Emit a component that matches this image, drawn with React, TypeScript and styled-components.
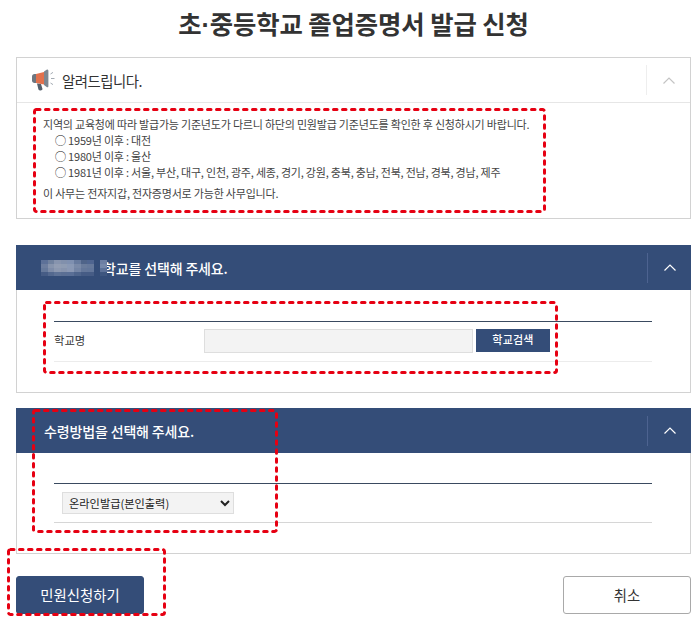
import React from "react";
import styled, { createGlobalStyle } from "styled-components";

const Global = createGlobalStyle`
  html, body { margin: 0; padding: 0; background: #fff; }
  body { font-family: "Noto Sans CJK KR", "Noto Sans", sans-serif; color: #333; }
`;

const Page = styled.div`
  position: relative;
  width: 700px;
  height: 618px;
  overflow: hidden;
  padding: 0 9px 0 16px;
  box-sizing: border-box;
`;

const Title = styled.h1`
  margin: 0;
  height: 57px;
  padding-top: 4px;
  box-sizing: border-box;
  font-size: 25.4px;
  line-height: 38px;
  font-weight: 700;
  text-align: center;
  color: #333;
  letter-spacing: -0.12px;
`;

const TitleDot = styled.span`
  font-family: "Liberation Sans", sans-serif;
`;

const Card = styled.section<{ $h: number; $mb: number }>`
  height: ${(p) => p.$h}px;
  margin-bottom: ${(p) => p.$mb}px;
  border: 1px solid #d2d2d2;
  box-sizing: border-box;
`;

const NoticeHead = styled.div`
  height: 45px;
  display: flex;
  align-items: center;
  padding-left: 14px;
  border-bottom: 1px solid #e6e6e6;
  box-sizing: border-box;
`;

const NoticeTitle = styled.h2`
  margin: 0 0 0 6px;
  flex: 1;
  font-size: 14.4px;
  font-weight: 400;
  letter-spacing: -0.5px;
  color: #333;
`;

const Toggle = styled.div<{ $light?: boolean }>`
  width: 43px;
  height: 30px;
  display: flex;
  align-items: center;
  justify-content: center;
  border-left: 1px solid ${(p) => (p.$light ? "#4d6390" : "#eeeeee")};
`;

const NoticeBody = styled.div`
  padding: 13px 0 0 26px;
  font-size: 11px;
  line-height: 16px;
  letter-spacing: -0.2px;
  color: #444;
`;

const List = styled.ul`
  list-style: none;
  margin: 0 0 5px;
  padding: 0 0 0 12px;
`;

const Ring = styled.span`
  color: #111;
  font-weight: 500;
`;

const Note = styled.p`
  margin: 0;
`;

const Bar = styled.div`
  height: 45px;
  margin: -1px -1px 0;
  background: #344d78;
  color: #fff;
  display: flex;
  align-items: center;
  padding-left: 28px;
  box-sizing: border-box;
`;

const BarTitle = styled.h2`
  flex: 1;
  margin: 0;
  display: flex;
  align-items: center;
  font-size: 14px;
  font-weight: 500;
  letter-spacing: -0.15px;
`;

const Mosaic = styled.svg`
  display: block;
  flex: none;
  position: relative;
  z-index: 1;
  margin: 0 -4px 0 -3px;
`;

const Table = styled.div<{ $top: number; $h: number; $line: string }>`
  margin: ${(p) => p.$top}px 38px 0 37px;
  height: ${(p) => p.$h}px;
  border-top: 1px solid #3a4a60;
  border-bottom: 1px solid ${(p) => p.$line};
  box-sizing: border-box;
  display: flex;
  align-items: flex-start;
`;

const Label = styled.label`
  width: 150px;
  margin-top: 10px;
  font-size: 11.3px;
  line-height: 16px;
  color: #333;
`;

const Field = styled.input`
  width: 269px;
  height: 24px;
  margin: 7px 0 0;
  padding: 0;
  box-sizing: border-box;
  border: 1px solid #dedede;
  background: #f3f3f3;
`;

const SearchButton = styled.button`
  width: 74px;
  height: 23px;
  margin: 7px 0 0 3px;
  padding: 0 0 2px;
  border: 0;
  background: #344d78;
  color: #fff;
  font: 500 11px/21px "Noto Sans CJK KR", sans-serif;
  letter-spacing: 0.2px;
`;

const Select = styled.select`
  width: 172px;
  height: 22px;
  margin: 8px 0 0 8px;
  padding: 0 0 0 2px;
  box-sizing: border-box;
  border: 1px solid #dedede;
  border-radius: 0;
  background-color: #f3f3f3;
  color: #222;
  font: 400 11.2px "Noto Sans CJK KR", sans-serif;
`;

const Actions = styled.div`
  display: flex;
  justify-content: space-between;
`;

const Action = styled.button<{ $primary?: boolean }>`
  width: 128px;
  height: 38px;
  padding: 0;
  box-sizing: border-box;
  border-radius: 3px;
  border: 1px solid ${(p) => (p.$primary ? "#344d78" : "#a9a9a9")};
  background: ${(p) => (p.$primary ? "#344d78" : "#fff")};
  color: ${(p) => (p.$primary ? "#fff" : "#333")};
  font: 400 14.4px/36px "Noto Sans CJK KR", sans-serif;
`;

const MarkFrame = styled.svg<{ $x: number; $y: number }>`
  position: absolute;
  left: ${(p) => p.$x}px;
  top: ${(p) => p.$y}px;
  pointer-events: none;
`;

const Mark = ({ x, y, w, h }: { x: number; y: number; w: number; h: number }) => (
  <MarkFrame $x={x} $y={y} width={w} height={h} viewBox={`0 0 ${w} ${h}`} fill="none">
    <rect
      x="1.5"
      y="1.5"
      width={w - 3}
      height={h - 3}
      rx="2"
      stroke="#e60012"
      strokeWidth="3"
      strokeLinecap="round"
      strokeDasharray="3.5 5.5"
    />
  </MarkFrame>
);

const Chevron = ({ color }: { color: string }) => (
  <svg width="14" height="9" viewBox="0 0 14 9" fill="none">
    <path d="M1.5 7.5 L7 2 L12.5 7.5" stroke={color} strokeWidth="1.2" />
  </svg>
);

const Megaphone = () => (
  <svg width="25" height="22" viewBox="0 0 25 22">
    <path d="M1 7.5 C1 6 2 5 3.5 5 L5 5 L5 14 L3.5 14 C2 14 1 13 1 11.5 Z" fill="#6d7680" />
    <path d="M5 5 L13 3 L13 15.5 L5 14 Z" fill="#e2714d" />
    <path d="M13 2.5 L16 0.5 C17 0.5 17.4 1 17.4 2 L17.4 17 C17.4 18 17 18.4 16 18.2 L13 16 Z" fill="#7d8791" />
    <path d="M6 14.5 L10 15 L11.5 20 C11.5 21 10.5 21.6 9 21.4 C8 21.3 7.5 20.8 7.3 20 Z" fill="#55606c" />
    <path d="M19.5 5 L22 3.4 M20 9.5 L23.5 9.5 M19.5 14 L22 15.6" stroke="#9aa2aa" strokeWidth="0.9" fill="none" />
  </svg>
);

const mosaic = [
  ["#5d7198","#71829f","#8794ae","#8190ac","#7f90b0","#687b9e","#4f6489","#4f6590","#344d78","#6d7fa3"],
  ["#6d7e9f","#8794ad","#929db3","#8f9cb3","#8a99b5","#7a8aa8","#6a7c9c","#66799b","#344d78","#7688aa"],
  ["#66799b","#7e8ca8","#8c98b0","#8794ae","#8a98b4","#7485a5","#64779a","#62769a","#344d78","#5d7299"],
  ["#465c85","#54698f","#5e7296","#5b6f94","#5a6f96","#4f658c","#465c85","#465c85","#344d78","#3e567f"],
];

const Blur = () => (
  <Mosaic width="66" height="16" viewBox="0 0 66 16" shapeRendering="crispEdges" aria-hidden="true">
    {mosaic.map((row, y) =>
      row.map((c, x) => <rect key={`${x}-${y}`} x={x * 6.6} y={y * 4} width="6.6" height="4" fill={c} />)
    )}
  </Mosaic>
);

export default function App() {
  return (
    <Page>
      <Global />
      <Title>초<TitleDot>·</TitleDot>중등학교 졸업증명서 발급 신청</Title>

      <Card $h={162} $mb={26}>
        <NoticeHead>
          <Megaphone />
          <NoticeTitle>알려드립니다.</NoticeTitle>
          <Toggle><Chevron color="#c4c4c4" /></Toggle>
        </NoticeHead>
        <NoticeBody>
          <Note>지역의 교육청에 따라 발급가능 기준년도가 다르니 하단의 민원발급 기준년도를 확인한 후 신청하시기 바랍니다.</Note>
          <List>
            <li><Ring>◯</Ring> 1959년 이후 : 대전</li>
            <li><Ring>◯</Ring> 1980년 이후 : 울산</li>
            <li><Ring>◯</Ring> 1981년 이후 : 서울, 부산, 대구, 인천, 광주, 세종, 경기, 강원, 충북, 충남, 전북, 전남, 경북, 경남, 제주</li>
          </List>
          <Note>이 사무는 전자지갑, 전자증명서로 가능한 사무입니다.</Note>
        </NoticeBody>
      </Card>

      <Card $h={148} $mb={15}>
        <Bar>
          <BarTitle><Blur />학교를 선택해 주세요.</BarTitle>
          <Toggle $light><Chevron color="#ffffff" /></Toggle>
        </Bar>
        <Table $top={31} $h={41} $line="#ececec">
          <Label>학교명</Label>
          <Field type="text" />
          <SearchButton type="button">학교검색</SearchButton>
        </Table>
      </Card>

      <Card $h={146} $mb={22}>
        <Bar>
          <BarTitle>수령방법을 선택해 주세요.</BarTitle>
          <Toggle $light><Chevron color="#ffffff" /></Toggle>
        </Bar>
        <Table $top={30} $h={40} $line="#d6d6d6">
          <Select defaultValue="온라인발급(본인출력)">
            <option>온라인발급(본인출력)</option>
          </Select>
        </Table>
      </Card>

      <Actions>
        <Action type="button" $primary>민원신청하기</Action>
        <Action type="button">취소</Action>
      </Actions>

      <Mark x={33} y={108} w={513} h={105} />
      <Mark x={43} y={301} w={515} h={73} />
      <Mark x={32} y={409} w={246} h={124} />
      <Mark x={7} y={548} w={159} h={68} />
    </Page>
  );
}
